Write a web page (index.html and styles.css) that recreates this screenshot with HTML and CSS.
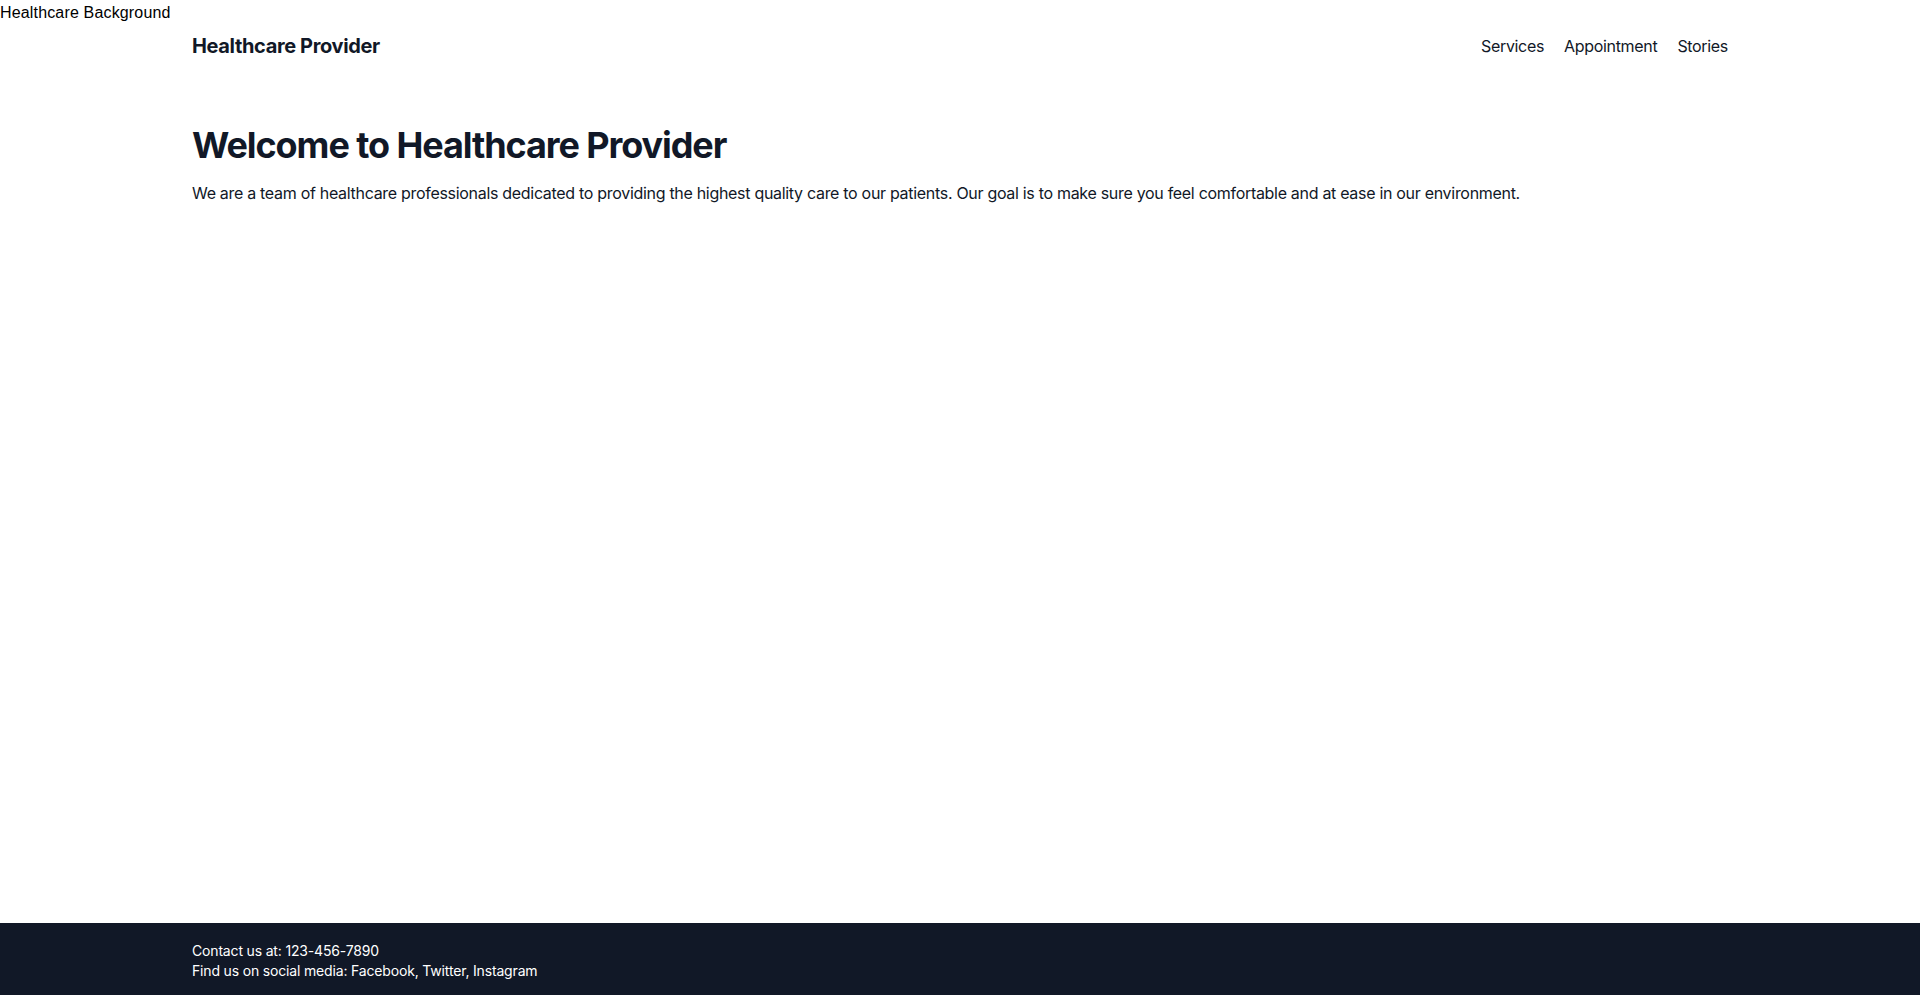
FILE: index.html
```html
<!DOCTYPE html>
<html lang="en">
<head>
<meta charset="utf-8">
<title>Healthcare Provider</title>
<link rel="stylesheet" href="styles.css">
</head>
<body>
<div class="page">
  <span class="bg-alt">Healthcare Background</span>
  <header class="header">
    <div class="container header-inner">
      <div class="brand">Healthcare Provider</div>
      <nav class="nav">
        <a href="#services">Services</a>
        <a href="#appointment">Appointment</a>
        <a href="#stories">Stories</a>
      </nav>
    </div>
  </header>
  <main class="main">
    <section class="container hero">
      <h1 class="hero-title">Welcome to Healthcare Provider</h1>
      <p class="hero-text">We are a team of healthcare professionals dedicated to providing the highest quality care to our patients. Our goal is to make sure you feel comfortable and at ease in our environment.</p>
    </section>
  </main>
  <footer class="footer">
    <div class="container">
      <p>Contact us at: 123-456-7890</p>
      <p>Find us on social media: Facebook, Twitter, Instagram</p>
    </div>
  </footer>
</div>
</body>
</html>
```
FILE: styles.css
```css
* { box-sizing: border-box; }
html, body { margin: 0; padding: 0; }
body {
  font-family: Inter, "Liberation Sans", Arial, sans-serif;
  color: #111827;
  background: #ffffff;
}
.page {
  position: relative;
  min-height: 100vh;
  display: flex;
  flex-direction: column;
}
.bg-alt {
  position: absolute;
  top: 1px;
  left: 0;
  font-family: "Liberation Sans", Arial, sans-serif;
  font-size: 16px;
  line-height: 24px;
  letter-spacing: 0.01em;
  color: #000;
}
.container {
  width: 1536px;
  max-width: 100%;
  margin: 0 auto;
}
.header {
  padding: 32px 0;
}
.header-inner {
  display: flex;
  justify-content: space-between;
  align-items: center;
}
.brand {
  font-size: 20px;
  line-height: 28px;
  font-weight: 700;
  letter-spacing: -0.018em;
}
.nav {
  display: flex;
  gap: 20px;
}
.nav a {
  color: #111827;
  text-decoration: none;
  font-size: 16px;
  line-height: 24px;
  letter-spacing: -0.02em;
}
.main { flex: 1; }
.hero { padding-top: 33px; }
.hero-title {
  margin: 0 0 16px;
  font-size: 36px;
  line-height: 40px;
  font-weight: 700;
  letter-spacing: -0.03em;
}
.hero-text {
  margin: 0;
  font-size: 16px;
  line-height: 24px;
  letter-spacing: -0.019em;
}
.footer {
  background: #111827;
  color: #ffffff;
  padding: 18px 0 14px;
}
.footer p {
  margin: 0;
  font-size: 14px;
  line-height: 20px;
  letter-spacing: -0.012em;
}
```
